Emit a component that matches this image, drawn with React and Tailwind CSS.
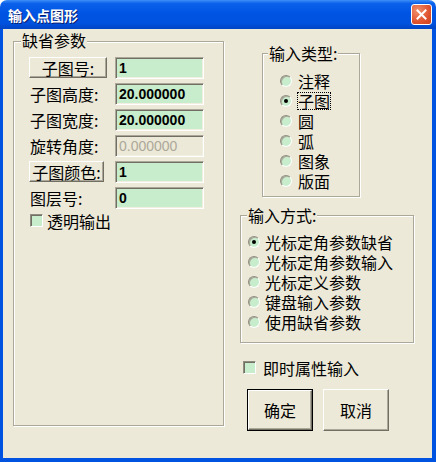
import React from "react";

const cjk = "font-['Noto_Sans_CJK_SC','Noto_Sans',sans-serif]";

const GroupBox = ({ label, labelLeft, className, children }) => (
  <div
    className={`relative border border-[#aca899] shadow-[1px_1px_0_#fff,inset_1px_1px_0_#fff] ${className}`}
  >
    <span
      className={`absolute -top-[10px] ${labelLeft} bg-[#ece9d8] px-[1px] text-[16px] leading-[18px]`}
    >
      {label}
    </span>
    {children}
  </div>
);

const RaisedButton = ({ children, className }) => (
  <button
    className={`flex items-center justify-center border border-t-white border-l-white border-b-[#716f64] border-r-[#716f64] bg-[#ece9d8] shadow-[inset_-1px_-1px_0_#aca899] text-[16px] leading-[16px] ${className}`}
  >
    {children}
  </button>
);

const Field = ({ value, disabled }) => (
  <div
    className={`flex h-[22px] w-[89px] items-center border border-t-[#aca899] border-l-[#aca899] border-b-white border-r-white pl-[3px] shadow-[inset_1px_1px_0_#716f64,inset_-1px_-1px_0_#f1efe2] font-['Liberation_Sans',sans-serif] text-[14px] leading-[16px] font-bold ${
      disabled ? "bg-[#ece9d8] text-[#aca899] font-normal" : "bg-[#c7edcc] text-black"
    }`}
  >
    {value}
  </div>
);

const Radio = ({ checked }) => (
  <span className="flex h-[12px] w-[12px] shrink-0 items-center justify-center rounded-full border border-t-[#8f8d80] border-l-[#8f8d80] border-b-white border-r-white bg-[#c7edcc] shadow-[inset_1px_1px_0_#aca899]">
    {checked && <span className="h-[4px] w-[4px] rounded-full bg-black" />}
  </span>
);

const CheckBox = () => (
  <span className="h-[13px] w-[13px] shrink-0 border border-t-[#8f8d80] border-l-[#8f8d80] border-b-white border-r-white bg-[#c7edcc] shadow-[inset_1px_1px_0_#716f64]" />
);

const params = [
  { label: "子图号:", value: "1", button: true },
  { label: "子图高度:", value: "20.000000" },
  { label: "子图宽度:", value: "20.000000" },
  { label: "旋转角度:", value: "0.000000", disabled: true },
  { label: "子图颜色:", value: "1", button: true, narrow: true },
  { label: "图层号:", value: "0" },
];

const types = ["注释", "子图", "圆", "弧", "图象", "版面"];
const modes = ["光标定角参数缺省", "光标定角参数输入", "光标定义参数", "键盘输入参数", "使用缺省参数"];

export default function App() {
  return (
    <div className={`flex h-[462px] w-[436px] flex-col text-black ${cjk}`}>
      <div className="flex h-[29px] shrink-0 items-center justify-between rounded-t-[7px] bg-[linear-gradient(to_bottom,#3d8ff7_0%,#0b61ea_12%,#0054e3_45%,#0052de_80%,#0045c4_100%)] pl-[8px] pr-[4px]">
        <span className="text-[14px] font-bold leading-[18px] text-white [text-shadow:1px_1px_0_#0a1e6e]">
          输入点图形
        </span>
        <span className="flex h-[21px] w-[21px] items-center justify-center rounded-[3px] border border-white bg-[radial-gradient(circle_at_30%_30%,#f0906e,#e0532f_60%,#c7401f)]">
          <svg width="13" height="13" viewBox="0 0 13 13">
            <path d="M2.5 2.5 L10.5 10.5 M10.5 2.5 L2.5 10.5" stroke="#fff" strokeWidth="2" strokeLinecap="square" />
          </svg>
        </span>
      </div>

      <div className="flex flex-1 border-b-[4px] border-l-[3px] border-r-[4px] border-[#0052e0] bg-[#ece9d8]">
        <GroupBox label="缺省参数" labelLeft="left-[7px] -top-[11px]" className="ml-[10px] mt-[12px] h-[385px] w-[211px]">
          <div className="flex flex-col gap-[4px] pl-[15px] pt-[15px]">
            {params.map((p) => (
              <div key={p.label} className="flex h-[22px] items-start">
                <div className="w-[86px]">
                  {p.button ? (
                    <RaisedButton className={`h-[21px] ${p.narrow ? "w-[75px]" : "w-[78px]"}`}>
                      {p.label}
                    </RaisedButton>
                  ) : (
                    <span className="block pl-[1px] pt-[2px] text-[16px] leading-[18px]">{p.label}</span>
                  )}
                </div>
                <Field value={p.value} disabled={p.disabled} />
              </div>
            ))}
            <div className="ml-[1px] mt-[1px] flex h-[13px] items-center gap-[4px]">
              <CheckBox />
              <span className="text-[16px] leading-[16px]">透明输出</span>
            </div>
          </div>
        </GroupBox>

        <div className="ml-[16px] flex w-[174px] flex-col">
          <GroupBox label="输入类型:" labelLeft="left-[5px]" className="ml-[22px] mt-[24px] h-[144px] w-[98px]">
            <div className="flex flex-col pl-[17px] pt-[17px]">
              {types.map((t, i) => (
                <div key={t} className="flex h-[20px] items-center gap-[5px]">
                  <Radio checked={i === 1} />
                  <span
                    className={`text-[16px] leading-[16px] ${
                      i === 1 ? "border border-dotted border-black" : "border border-transparent"
                    }`}
                  >
                    {t}
                  </span>
                </div>
              ))}
            </div>
          </GroupBox>

          <GroupBox label="输入方式:" labelLeft="left-[6px]" className="mt-[18px] h-[128px] w-[174px]">
            <div className="flex flex-col pl-[7px] pt-[16px]">
              {modes.map((m, i) => (
                <div key={m} className="flex h-[20px] items-center gap-[5px]">
                  <Radio checked={i === 0} />
                  <span className="text-[16px] leading-[16px]">{m}</span>
                </div>
              ))}
            </div>
          </GroupBox>

          <div className="ml-[3px] mt-[18px] flex h-[13px] items-center gap-[7px]">
            <CheckBox />
            <span className="text-[16px] leading-[16px]">即时属性输入</span>
          </div>

          <div className="ml-[7px] mt-[15px] flex gap-[10px]">
            <div className="border border-black">
              <RaisedButton className="h-[40px] w-[64px]">确定</RaisedButton>
            </div>
            <RaisedButton className="h-[42px] w-[66px]">取消</RaisedButton>
          </div>
        </div>
      </div>
    </div>
  );
}
